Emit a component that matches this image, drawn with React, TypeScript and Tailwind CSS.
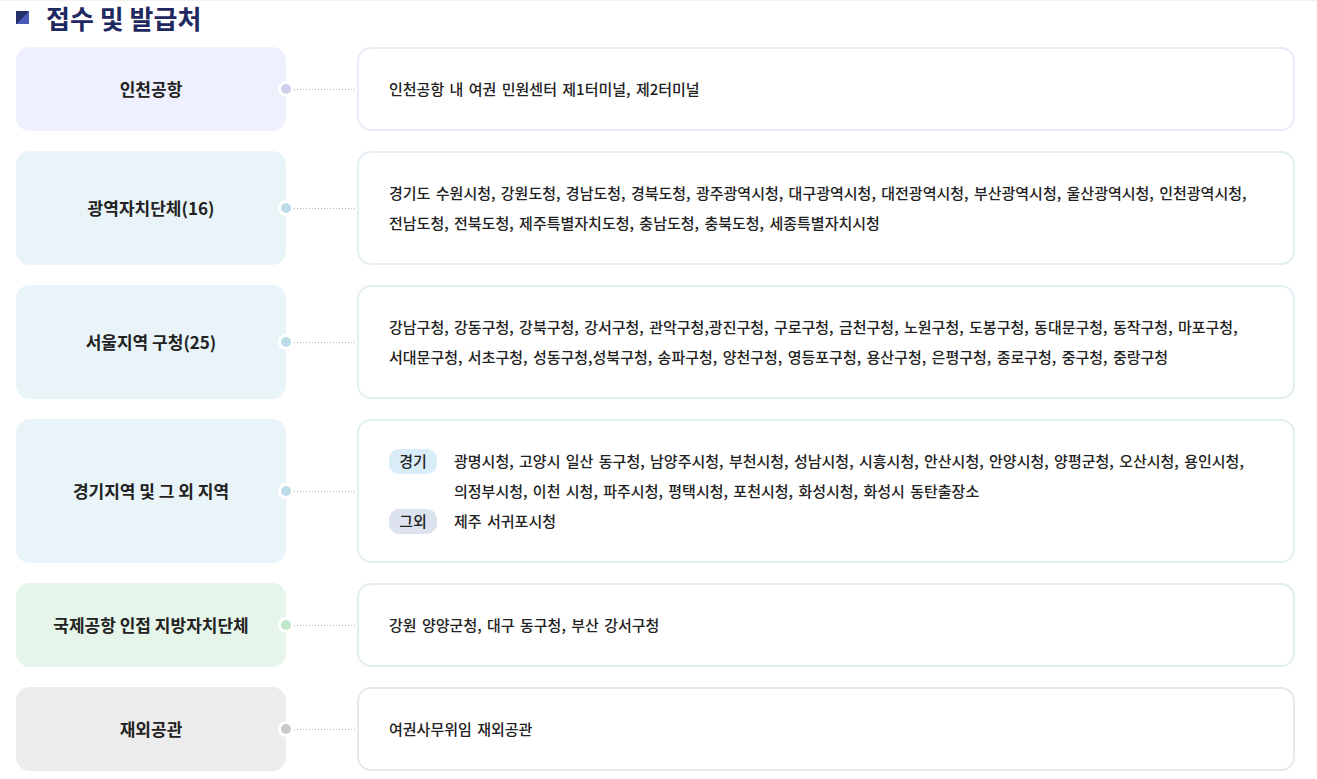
import { ReactNode } from "react";

type Tone = {
  box: string;
  dot: string;
  border: string;
};

const tones: Record<string, Tone> = {
  airport: { box: "bg-[#eef0fd]", dot: "bg-[#ccd0ec]", border: "border-[#e9ebf8]" },
  blue: { box: "bg-[#e8f4f8]", dot: "bg-[#bcdcea]", border: "border-[#e2eff3]" },
  green: { box: "bg-[#e6f5ea]", dot: "bg-[#c1e6cc]", border: "border-[#e2f1e7]" },
  gray: { box: "bg-[#ececec]", dot: "bg-[#c9c9c9]", border: "border-[#e8e8e8]" },
};

function Row({ title, tone, children }: { title: string; tone: Tone; children: ReactNode }) {
  return (
    <div className="flex items-stretch">
      <div
        className={`relative w-[270px] shrink-0 rounded-[14px] ${tone.box} flex items-center justify-center text-[17px] font-bold text-[#222]`}
      >
        {title}
        <span
          className={`absolute right-[-8px] top-1/2 -translate-y-1/2 h-[16px] w-[16px] rounded-full border-[3px] border-white ${tone.dot}`}
        />
      </div>
      <div className="w-[71px] shrink-0 flex items-center pl-[8px]">
        <div className="h-px w-full bg-[linear-gradient(to_right,#b5b5b5_1px,transparent_1px)] bg-[length:3px_1px]" />
      </div>
      <div
        className={`flex-1 rounded-[14px] border-2 ${tone.border} bg-white px-[30px] py-[25px] flex items-center text-[15px] font-medium leading-[30px] text-[#222] [word-spacing:2px]`}
      >
        <div>{children}</div>
      </div>
    </div>
  );
}

function Badge({ label, color }: { label: string; color: string }) {
  return (
    <div className="h-[30px] flex items-center">
      <span
        className={`h-[25px] w-[48px] rounded-[10px] ${color} flex items-center justify-center text-[15px] text-[#222]`}
      >
        {label}
      </span>
    </div>
  );
}

export default function App() {
  return (
    <div
      className="min-h-screen bg-white pl-4 pr-[22px] border-t border-[#f1f1f1]"
      style={{ fontFamily: '"Noto Sans CJK KR", "Noto Sans", sans-serif' }}
    >
      <div className="flex items-center gap-[17px] h-[33px] mb-[13px]">
        <span className="h-[13px] w-[13px] bg-[linear-gradient(135deg,#27306f_50%,#4a58b8_50%)]" />
        <h2 className="text-[26px] font-bold text-[#1f2860] leading-none">접수 및 발급처</h2>
      </div>

      <div className="flex flex-col gap-[20px]">
        <Row title="인천공항" tone={tones.airport}>
          인천공항 내 여권 민원센터 제1터미널, 제2터미널
        </Row>

        <Row title="광역자치단체(16)" tone={tones.blue}>
          경기도 수원시청, 강원도청, 경남도청, 경북도청, 광주광역시청, 대구광역시청, 대전광역시청, 부산광역시청, 울산광역시청, 인천광역시청,
          <br />
          전남도청, 전북도청, 제주특별자치도청, 충남도청, 충북도청, 세종특별자치시청
        </Row>

        <Row title="서울지역 구청(25)" tone={tones.blue}>
          강남구청, 강동구청, 강북구청, 강서구청, 관악구청,광진구청, 구로구청, 금천구청, 노원구청, 도봉구청, 동대문구청, 동작구청, 마포구청,
          <br />
          서대문구청, 서초구청, 성동구청,성북구청, 송파구청, 양천구청, 영등포구청, 용산구청, 은평구청, 종로구청, 중구청, 중랑구청
        </Row>

        <Row title="경기지역 및 그 외 지역" tone={tones.blue}>
          <div className="grid grid-cols-[48px_1fr] gap-x-[17px]">
            <Badge label="경기" color="bg-[#d8edf7]" />
            <div>
              광명시청, 고양시 일산 동구청, 남양주시청, 부천시청, 성남시청, 시흥시청, 안산시청, 안양시청, 양평군청, 오산시청, 용인시청,
              <br />
              의정부시청, 이천 시청, 파주시청, 평택시청, 포천시청, 화성시청, 화성시 동탄출장소
            </div>
            <Badge label="그외" color="bg-[#dde3ee]" />
            <div>제주 서귀포시청</div>
          </div>
        </Row>

        <Row title="국제공항 인접 지방자치단체" tone={tones.green}>
          강원 양양군청, 대구 동구청, 부산 강서구청
        </Row>

        <Row title="재외공관" tone={tones.gray}>
          여권사무위임 재외공관
        </Row>
      </div>
    </div>
  );
}
